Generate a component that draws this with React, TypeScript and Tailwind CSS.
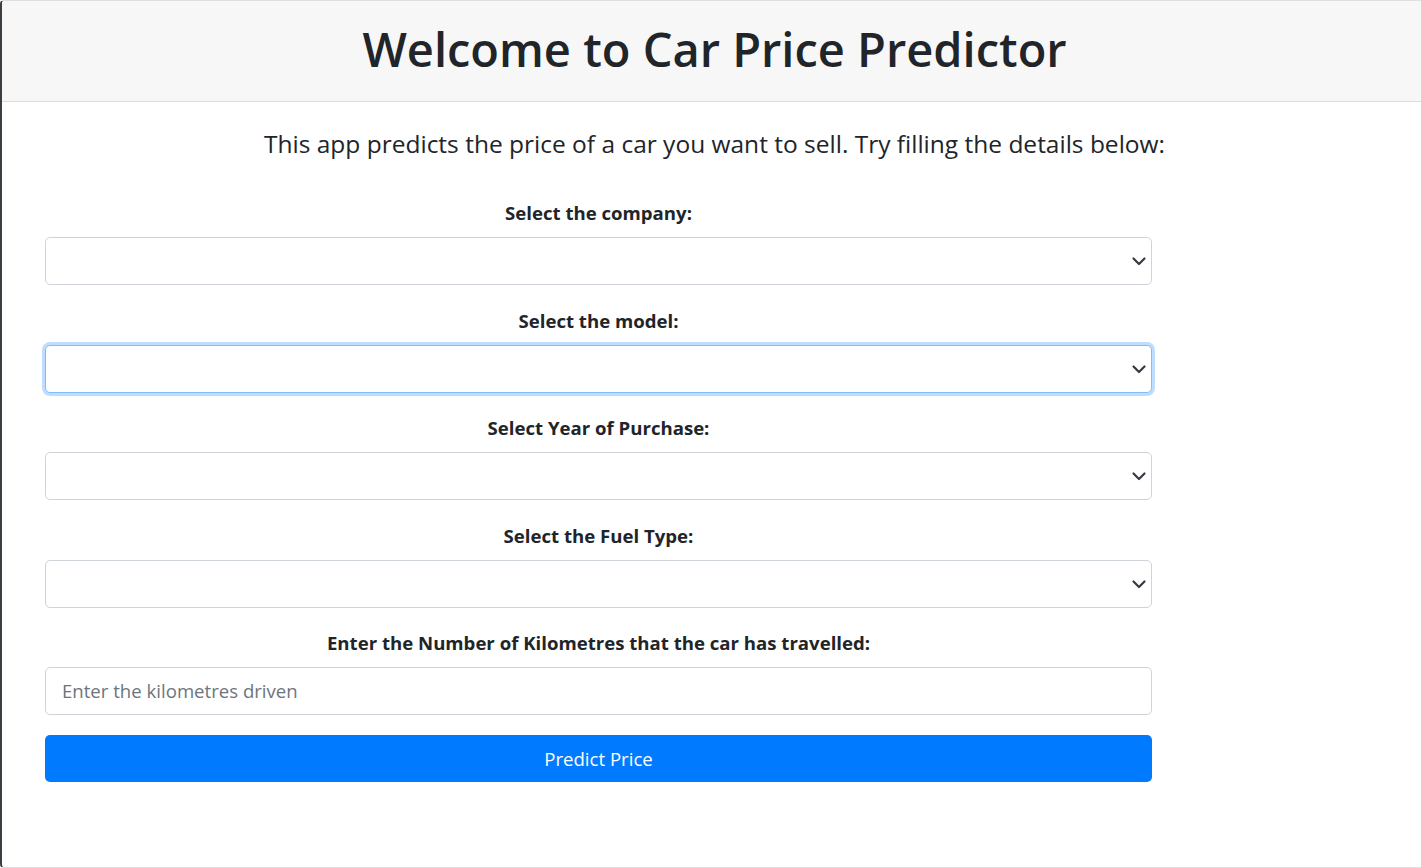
import React from 'react';

const font = { fontFamily: '"Open Sans", "Noto Sans", sans-serif' };

const Chevron: React.FC = () => (
  <svg
    className="absolute right-[4px] top-1/2 -translate-y-1/2"
    width="16"
    height="16"
    viewBox="0 0 16 16"
  >
    <path d="M2.5 5.5l5.5 5.5 5.5-5.5" fill="none" stroke="#343a40" strokeWidth="2.2" strokeLinecap="round" strokeLinejoin="round" />
  </svg>
);

interface FieldProps {
  label: string;
  focused?: boolean;
}

const Field: React.FC<FieldProps> = ({ label, focused = false }) => (
  <div className="mb-[22.5px]">
    <div className="h-[26px] leading-[26px] text-center text-[18.6px] font-bold text-[#212529] mb-[11px]">
      {label}
    </div>
    <div
      className={`relative h-[48px] rounded-[5px] border bg-white ${
        focused
          ? 'border-[#80bdff] shadow-[0_0_0_3px_rgba(0,123,255,0.25)]'
          : 'border-[#ced4da]'
      }`}
    >
      <Chevron />
    </div>
  </div>
);

export default function App() {
  return (
    <div style={font} className="w-[1421px] h-[868px] bg-white">
      <div className="h-[868px] border-l-2 border-t border-b border-l-[#3a3f44] border-t-[#dfdfdf] border-b-[#dfdfdf] rounded-l-[4px] overflow-hidden">
        <div className="h-[101px] bg-[#f7f7f7] border-b border-[#dcdcdc] flex items-center justify-center">
          <h1 className="text-[47px] font-semibold text-[#212529] leading-none -mt-[4px] pl-[6px]">
            Welcome to Car Price Predictor
          </h1>
        </div>
        <div className="pt-[27px]">
          <p className="text-center text-[24.5px] leading-[29px] text-[#212529] pl-[6px]">
            This app predicts the price of a car you want to sell. Try filling the details below:
          </p>
          <form className="w-[1107px] ml-[43px] mt-[42px]" onSubmit={(e) => e.preventDefault()}>
            <Field label="Select the company:" />
            <Field label="Select the model:" focused />
            <Field label="Select Year of Purchase:" />
            <Field label="Select the Fuel Type:" />
            <div>
              <div className="h-[26px] leading-[26px] text-center text-[18.6px] font-bold text-[#212529] mb-[11px]">
                Enter the Number of Kilometres that the car has travelled:
              </div>
              <div className="h-[48px] rounded-[5px] border border-[#ced4da] bg-white px-4 flex items-center text-[18.6px] text-[#6c757d]">
                Enter the kilometres driven
              </div>
            </div>
            <button
              type="submit"
              className="mt-[20px] w-full h-[47px] rounded-[5px] bg-[#007bff] text-white text-[18.6px]"
            >
              Predict Price
            </button>
          </form>
        </div>
      </div>
    </div>
  );
}
